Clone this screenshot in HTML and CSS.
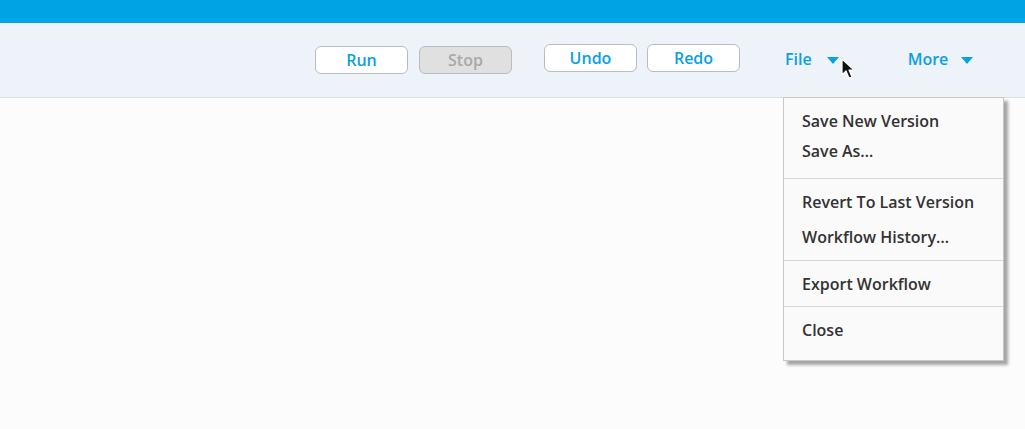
FILE: index.html
```html
<!DOCTYPE html>
<html lang="en">
<head>
    <meta charset="utf-8">
    <title>Workflow Editor</title>
    <link rel="stylesheet" href="styles.css">
</head>
<body>
    <div class="top-bar"></div>
    <div class="toolbar">
        <div class="btn-group">
            <button class="tool-btn">Run</button>
            <button class="tool-btn disabled">Stop</button>
        </div>
        <div class="btn-group edit-group">
            <button class="tool-btn">Undo</button>
            <button class="tool-btn">Redo</button>
        </div>
        <div class="menu file-menu">
            <span class="menu-label">File</span>
            <span class="caret"></span>
            <!-- mouse pointer over the caret -->
            <svg class="pointer" width="14" height="22" viewBox="0 0 14 22">
                <path d="M1 1 L1 17 L5 13 L8 20 L11 19 L8 12 L13 12 Z" fill="#111" stroke="#fff" stroke-width="1.2" stroke-linejoin="round"/>
            </svg>
            <div class="dropdown">
                <div class="menu-group">
                    <div class="menu-item">Save New Version</div>
                    <div class="menu-item">Save As…</div>
                </div>
                <div class="menu-group spaced">
                    <div class="menu-item">Revert To Last Version</div>
                    <div class="menu-item">Workflow History…</div>
                </div>
                <div class="menu-group">
                    <div class="menu-item">Export Workflow</div>
                </div>
                <div class="menu-group">
                    <div class="menu-item">Close</div>
                </div>
            </div>
        </div>
        <div class="menu more-menu">
            <span class="menu-label">More</span>
            <span class="caret"></span>
        </div>
    </div>
    <div class="canvas"></div>
</body>
</html>
```

FILE: styles.css
```css
body {
    margin: 0;
    padding: 0;
    font-family: "Open Sans", Lato, sans-serif;
    background-color: #fcfcfc;
    height: 100vh;
    overflow: hidden;
}
.top-bar {
    height: 23px;
    background-color: #00a3e3;
}
.toolbar {
    display: flex;
    align-items: center;
    height: 74px;
    padding-left: 315px;
    background-color: #eef3fa;
    border-bottom: 1px solid #d9dfe6;
}
.btn-group {
    display: flex;
    gap: 11px;
}
.edit-group {
    gap: 10px;
    margin-left: 32px;
    margin-bottom: 4px;
}
.tool-btn {
    width: 93px;
    height: 28px;
    padding: 0;
    background-color: #fff;
    border: 1px solid #b9bcc0;
    border-radius: 6px;
    color: #0aa0e1;
    font-family: "Open Sans", Lato, sans-serif;
    font-size: 16px;
    font-weight: 600;
    cursor: pointer;
}
.tool-btn.disabled {
    background-color: #e0e0e0;
    color: #a8a8a8;
}
.menu {
    position: relative;
    display: flex;
    align-items: center;
    margin-bottom: 2px;
    color: #0aa0e1;
    font-size: 16px;
    font-weight: 600;
}
.file-menu {
    margin-left: 45px;
}
.more-menu {
    margin-left: 69px;
}
.caret {
    width: 0;
    height: 0;
    margin-left: 15px;
    margin-top: 2px;
    border-left: 6px solid transparent;
    border-right: 6px solid transparent;
    border-top: 7px solid #0aa0e1;
}
.more-menu .caret {
    margin-left: 13px;
}
.pointer {
    position: absolute;
    left: 56px;
    top: 10px;
}
/* file dropdown */
.dropdown {
    position: absolute;
    top: 49px;
    left: -2px;
    width: 219px;
    background-color: #fafafa;
    border: 1px solid #c8c8c8;
    border-top: 0;
    box-shadow: 4px 4px 3px rgba(0, 0, 0, 0.35);
    color: #333;
    font-weight: 600;
    z-index: 5;
}
.menu-group {
    display: flex;
    flex-direction: column;
    padding: 8px 0 7px;
    border-top: 1px solid #d6d6d6;
}
.menu-group:first-child {
    border-top: 1px solid #c8c8c8;
    padding-bottom: 12px;
}
.menu-group.spaced {
    gap: 5px;
    padding-bottom: 8px;
}
.menu-group:last-child {
    padding-bottom: 15px;
}
.menu-item {
    line-height: 30px;
    padding-left: 18px;
    white-space: nowrap;
    cursor: pointer;
}
```
